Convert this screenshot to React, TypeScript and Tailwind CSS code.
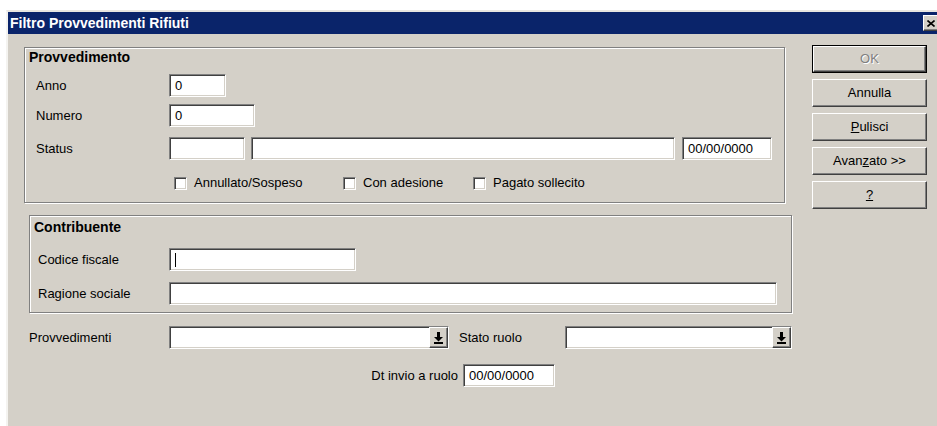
import type { ReactNode } from 'react'

// classic 3D borders
const sunken =
  'border border-t-[#808080] border-l-[#808080] border-r-white border-b-white shadow-[inset_1px_1px_0_#404040,inset_-1px_-1px_0_#d4d0c8]'
const raised =
  'border border-t-white border-l-white border-r-[#404040] border-b-[#404040] shadow-[inset_-1px_-1px_0_#808080]'
const etched = 'border border-[#808080] shadow-[inset_1px_1px_0_#fff,1px_1px_0_#fff]'

function Field({ className, children }: { className: string; children?: ReactNode }) {
  return (
    <div className={`h-[23px] shrink-0 bg-white ${sunken} flex items-center pl-[5px] ${className}`}>
      {children}
    </div>
  )
}

function Check({ label, className }: { label: string; className: string }) {
  return (
    <div className={`flex items-center shrink-0 ${className}`}>
      <span className={`w-[13px] h-[13px] bg-white ${sunken}`} />
      <span className="ml-[7px]">{label}</span>
    </div>
  )
}

function DropArrow() {
  return (
    <svg width="9" height="12" viewBox="0 0 9 12" fill="black">
      <rect x="3" y="0" width="3" height="5" />
      <path d="M0 5h9L4.5 9.5z" />
      <rect x="0" y="10" width="9" height="2" />
    </svg>
  )
}

function Combo({ className }: { className: string }) {
  return (
    <div className={`h-[23px] shrink-0 bg-white ${sunken} flex justify-end ${className}`}>
      <div className={`w-[19px] h-full bg-[#d4d0c8] ${raised} flex items-center justify-center`}>
        <DropArrow />
      </div>
    </div>
  )
}

function Button({ children, disabled, def }: { children: ReactNode; disabled?: boolean; def?: boolean }) {
  const face = (
    <div
      className={`h-full w-full bg-[#d4d0c8] ${raised} flex items-center justify-center ${
        disabled ? 'text-[#808080] [text-shadow:1px_1px_0_#fff]' : ''
      }`}
    >
      {children}
    </div>
  )
  if (def) return <div className="h-[28px] w-[115px] border border-black">{face}</div>
  return <div className="h-[28px] w-[115px]">{face}</div>
}

export default function App() {
  return (
    <div className="w-[937px] h-[426px] overflow-hidden bg-white font-['Liberation_Sans',Arial,sans-serif] text-[13px] text-black">
      <div className="mt-[10px] ml-[6px] w-[935px] h-[420px] bg-[#d4d0c8] border-t-2 border-l-2 border-t-[#e8e6e1] border-l-[#f4f3f0] flex flex-col">
        {/* Title bar */}
        <div className="h-[22px] shrink-0 bg-[#0a246a] flex items-center justify-between pl-[2px] pr-[2px]">
          <span className="text-white font-bold text-[14px] leading-[16px]">Filtro Provvedimenti Rifiuti</span>
          <div className={`w-[16px] h-[16px] bg-[#d4d0c8] ${raised} flex items-center justify-center`}>
            <svg width="8" height="7" viewBox="0 0 8 7" stroke="black" strokeWidth="1.6">
              <path d="M0.5 0.5l7 6M7.5 0.5l-7 6" />
            </svg>
          </div>
        </div>

        <div className="flex">
          {/* Form */}
          <div className="w-[784px] shrink-0">
            <section className={`ml-[16px] mt-[13px] w-[761px] h-[156px] ${etched} pl-[4px] pt-[1px]`}>
              <div className="h-[16px] leading-[16px] font-bold text-[14px]">Provvedimento</div>
              <div className="mt-[9px] flex items-center h-[23px]">
                <span className="ml-[7px] w-[133px] shrink-0">Anno</span>
                <Field className="w-[57px]">0</Field>
              </div>
              <div className="mt-[7px] flex items-center h-[23px]">
                <span className="ml-[7px] w-[133px] shrink-0">Numero</span>
                <Field className="w-[86px]">0</Field>
              </div>
              <div className="mt-[10px] flex items-center h-[23px]">
                <span className="ml-[7px] w-[133px] shrink-0">Status</span>
                <Field className="w-[76px]" />
                <Field className="ml-[6px] w-[424px]" />
                <Field className="ml-[7px] w-[90px]">00/00/0000</Field>
              </div>
              <div className="mt-[15px] flex items-center h-[16px] pl-[145px]">
                <Check label="Annullato/Sospeso" className="w-[169px]" />
                <Check label="Con adesione" className="w-[130px]" />
                <Check label="Pagato sollecito" className="w-[150px]" />
              </div>
            </section>

            <section className={`ml-[21px] mt-[12px] w-[763px] h-[98px] ${etched} pl-[4px] pt-[3px]`}>
              <div className="h-[16px] leading-[16px] font-bold text-[14px]">Contribuente</div>
              <div className="mt-[13px] flex items-center h-[23px]">
                <span className="ml-[4px] w-[131px] shrink-0">Codice fiscale</span>
                <Field className="w-[187px]">
                  <span className="w-px h-[14px] bg-black" />
                </Field>
              </div>
              <div className="mt-[11px] flex items-center h-[23px]">
                <span className="ml-[4px] w-[131px] shrink-0">Ragione sociale</span>
                <Field className="w-[608px]" />
              </div>
            </section>

            <div className="mt-[13px] pl-[21px] flex items-center h-[23px]">
              <span className="w-[140px] shrink-0">Provvedimenti</span>
              <Combo className="w-[280px]" />
              <span className="ml-[10px] w-[106px] shrink-0">Stato ruolo</span>
              <Combo className="w-[227px]" />
            </div>

            <div className="mt-[15px] pl-[363px] flex items-center h-[23px]">
              <span className="w-[92px] shrink-0 text-right pr-[5px]">Dt invio a ruolo</span>
              <Field className="w-[92px]">00/00/0000</Field>
            </div>
          </div>

          {/* Command buttons */}
          <div className="ml-[20px] mt-[11px] flex flex-col gap-[6px]">
            <Button def disabled>OK</Button>
            <Button>Annulla</Button>
            <Button>
              <span><u>P</u>ulisci</span>
            </Button>
            <Button>
              <span>Avan<u>z</u>ato &gt;&gt;</span>
            </Button>
            <Button>
              <u>?</u>
            </Button>
          </div>
        </div>
      </div>
    </div>
  )
}
